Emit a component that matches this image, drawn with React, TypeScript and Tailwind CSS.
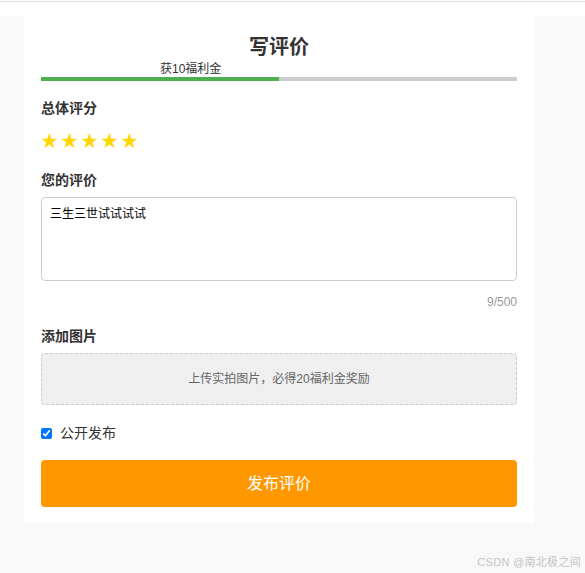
import React from 'react';

const progress = 50;

export default function App() {
  return (
    <div className="min-h-[573px] bg-[#f8f8f8] font-['Liberation_Sans','Noto_Sans_CJK_SC',sans-serif] text-[#333]">
      <div className="h-[16px] bg-white">
        <div className="h-px" />
        <div className="h-px bg-[#dadada]" />
      </div>

      <div className="ml-[24px] w-[510px] bg-white px-[17px] pt-[17px] pb-[16px]">
        <h2 className="text-center text-[20px] leading-[28px] font-bold">写评价</h2>

        {/* 进度 */}
        <div className="relative h-[16px]">
          <span
            className="absolute top-0 text-[12px] leading-[16px] text-[#333]"
            style={{ left: `${progress / 2}%` }}
          >
            获10福利金
          </span>
        </div>
        <div className="h-1 bg-[#cccccc]">
          <div className="h-full bg-[#4caf50]" style={{ width: `${progress}%` }} />
        </div>

        <div className="mt-[17px] text-[14px] leading-[20px] font-bold">总体评分</div>
        <div className="mt-[8px] flex h-[28px] items-center">
          {[1, 2, 3, 4, 5].map((i) => (
            <span key={i} className="inline-block w-[20px] text-[17px] leading-[28px] text-[#ffd700] font-['Noto_Sans_CJK_SC',sans-serif]">
              ★
            </span>
          ))}
        </div>

        <div className="mt-[16px] text-[14px] leading-[20px] font-bold">您的评价</div>
        <textarea
          defaultValue="三生三世试试试试"
          className="mt-[7px] block h-[84px] w-full resize-none rounded-[4px] border border-[#cccccc] px-[8px] py-[8px] text-[12px] leading-[16px] text-black outline-none"
        />
        <div className="mt-[13px] text-right text-[12px] leading-[16px] text-[#999]">9/500</div>

        <div className="mt-[16px] text-[14px] leading-[20px] font-bold">添加图片</div>
        <div className="mt-[7px] flex h-[52px] items-center justify-center rounded-[4px] border border-dashed border-[#cccccc] bg-[#efefef] text-[12px] text-[#666]">
          上传实拍图片，必得20福利金奖励
        </div>

        <label className="mt-[18px] flex h-[20px] items-center text-[14px] text-[#333]">
          <input type="checkbox" defaultChecked className="m-0 h-[11px] w-[11px] accent-[#0075ff]" />
          <span className="ml-[8px]">公开发布</span>
        </label>

        <button className="mt-[17px] block h-[47px] w-full rounded-[4px] bg-[#ff9800] text-[16px] text-white">
          发布评价
        </button>
      </div>

      <div className="mt-[31px] pr-[4px] text-right text-[11px] leading-[16px] tracking-[0.3px] text-[#c4c4c4]">CSDN @南北极之间</div>
    </div>
  );
}
